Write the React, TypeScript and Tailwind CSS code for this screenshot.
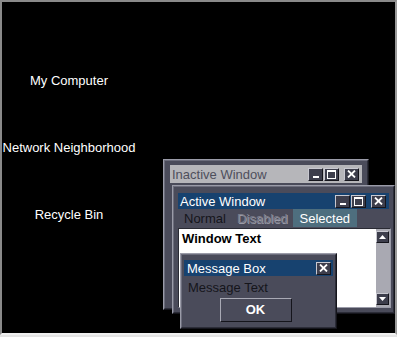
import { ReactNode } from "react";

const FONT = { fontFamily: '"Liberation Sans", Arial, sans-serif' };

const desktopIcons = ["My Computer", "Network Neighborhood", "Recycle Bin"];

type CaptionButtonProps = {
  kind: "min" | "max" | "close";
};

const CaptionButton = ({ kind }: CaptionButtonProps) => {
  return (
    <div className="flex h-[13px] w-[15px] items-center justify-center border border-t-[#c8c8d0] border-l-[#c8c8d0] border-r-[#15151c] border-b-[#15151c] bg-[#3d3e4c]">
      {kind === "min" && <div className="mt-[6px] h-[2px] w-[6px] bg-white" />}
      {kind === "max" && (
        <div className="h-[9px] w-[9px] border border-t-2 border-white" />
      )}
      {kind === "close" && (
        <svg width="9" height="8" viewBox="0 0 9 8">
          <path d="M1 0.5 L8 7.5 M8 0.5 L1 7.5" stroke="white" strokeWidth="1.8" />
        </svg>
      )}
    </div>
  );
};

const ScrollArrow = ({ up }: { up: boolean }) => (
  <div className="flex h-[12px] w-[13px] items-center justify-center border border-t-[#c8c8d0] border-l-[#c8c8d0] border-r-[#15151c] border-b-[#15151c] bg-[#3d3e4c]">
    <svg width="7" height="4" viewBox="0 0 7 4">
      <path d={up ? "M0 4 L3.5 0 L7 4 Z" : "M0 0 L3.5 4 L7 0 Z"} fill="white" />
    </svg>
  </div>
);

type WindowFrameProps = {
  className: string;
  children: ReactNode;
};

const WindowFrame = ({ className, children }: WindowFrameProps) => (
  <div
    className={`absolute border border-t-[#9a9ba8] border-l-[#9a9ba8] border-r-[#15151c] border-b-[#15151c] bg-[#4a4b5a] ${className}`}
  >
    <div className="h-full w-full border border-t-[#6c6d7c] border-l-[#6c6d7c] border-r-[#2c2d38] border-b-[#2c2d38]">
      {children}
    </div>
  </div>
);

export default function App() {
  return (
    <div className="relative h-[337px] w-[397px] bg-[#e4e4e4]" style={FONT}>
      <div className="relative h-[335px] w-[397px] border-t-2 border-l-2 border-r-2 border-b-2 border-t-[#8a8a8a] border-l-[#8a8a8a] border-r-[#9a9a9a] border-b-[#f0f0f0] bg-black">
        {/* desktop labels */}
        <div className="flex w-[134px] flex-col items-center pt-[71px] text-[13px] leading-[16px] text-white">
          {desktopIcons.map((label) => (
            <div key={label} className="mb-[51px] whitespace-nowrap">
              {label}
            </div>
          ))}
        </div>

        {/* inactive window */}
        <WindowFrame className="left-[161px] top-[157px] h-[151px] w-[206px]">
          <div className="px-[5px] pt-[4px]">
            <div className="flex h-[18px] items-center justify-between bg-[#b6b6ba] pl-[2px] pr-[3px]">
              <span className="text-[13px] leading-none text-[#4e4f5c]">Inactive Window</span>
              <div className="flex gap-[1px]">
                <CaptionButton kind="min" />
                <CaptionButton kind="max" />
                <div className="w-[3px]" />
                <CaptionButton kind="close" />
              </div>
            </div>
          </div>
        </WindowFrame>

        {/* active window */}
        <WindowFrame className="left-[170px] top-[183px] h-[129px] w-[223px]">
          <div className="px-[4px] pt-[6px]">
            <div className="flex h-[16px] items-center justify-between bg-[#17426f] pl-[2px] pr-[3px]">
              <span className="text-[13px] leading-none text-white">Active Window</span>
              <div className="flex gap-[1px]">
                <CaptionButton kind="min" />
                <CaptionButton kind="max" />
                <div className="w-[3px]" />
                <CaptionButton kind="close" />
              </div>
            </div>
            <div className="flex h-[18px] items-center text-[13px] leading-none">
              <span className="pl-[6px] pr-[11px] text-[#15151b]">Normal</span>
              <span className="pr-[5px] text-[#7c7d8a] [text-shadow:1px_1px_0_#9a9ba8]">
                Disabled
              </span>
              <span className="flex h-[18px] w-[64px] items-center bg-[#4e6e7e] pl-[7px] text-white">
                Selected
              </span>
            </div>
            <div className="mt-[1px] flex h-[80px] w-[213px] border border-t-[#2a2b34] border-l-[#2a2b34] border-r-[#9a9ba8] border-b-[#9a9ba8]">
              <div className="flex-1 bg-white pl-[3px] pt-[2px]">
                <div className="text-[13px] font-bold leading-[16px] text-black">Window Text</div>
              </div>
              <div className="flex w-[14px] flex-col justify-between bg-[#a9a9b2] py-[2px]">
                <ScrollArrow up />
                <ScrollArrow up={false} />
              </div>
            </div>
          </div>
        </WindowFrame>

        {/* message box */}
        <WindowFrame className="left-[178px] top-[251px] h-[76px] w-[157px]">
          <div className="px-[2px] pt-[5px]">
            <div className="flex h-[16px] items-center justify-between bg-[#17426f] pl-[3px] pr-[2px]">
              <span className="text-[13px] leading-none text-white">Message Box</span>
              <CaptionButton kind="close" />
            </div>
            <div className="pl-[4px] pt-[4px] text-[13px] leading-[16px] text-[#15151b]">
              Message Text
            </div>
            <div className="flex justify-center pr-[6px] pt-[2px]">
              <div className="flex h-[24px] w-[72px] items-center justify-center border border-t-[#a8a9b4] border-l-[#a8a9b4] border-r-[#15151c] border-b-[#15151c] bg-[#4a4b5a] text-[13px] font-bold text-white">
                OK
              </div>
            </div>
          </div>
        </WindowFrame>
      </div>
    </div>
  );
}
